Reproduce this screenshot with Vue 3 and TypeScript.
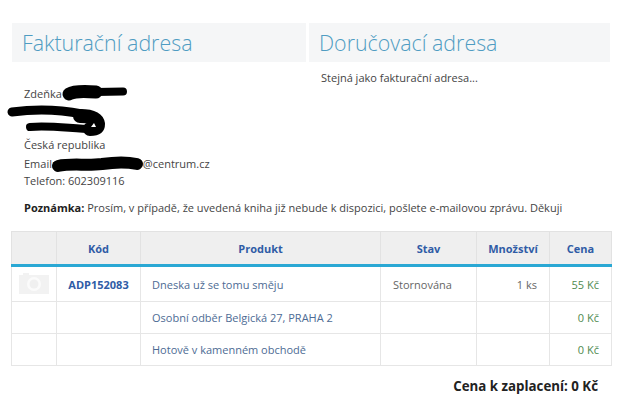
<script setup lang="ts">
interface Row {
  code: string
  product: string
  state: string
  qty: string
  price: string
  photo: boolean
}

const rows: Row[] = [
  { code: 'ADP152083', product: 'Dneska už se tomu směju', state: 'Stornována', qty: '1 ks', price: '55 Kč', photo: true },
  { code: '', product: 'Osobní odběr Belgická 27, PRAHA 2', state: '', qty: '', price: '0 Kč', photo: false },
  { code: '', product: 'Hotově v kamenném obchodě', state: '', qty: '', price: '0 Kč', photo: false }
]
</script>

<template>
  <div class="page">
    <div class="heads">
      <h2>Fakturační adresa</h2>
      <h2>Doručovací adresa</h2>
    </div>

    <div class="addresses">
      <div class="billing">
        <p>Zdeňka</p>
        <p>&nbsp;</p>
        <p>&nbsp;</p>
        <p>Česká republika</p>
        <p class="email">Email:<span class="hidden-mail"></span>@centrum.cz</p>
        <p>Telefon: 602309116</p>
      </div>
      <div class="delivery">Stejná jako fakturační adresa...</div>
    </div>

    <p class="note"><b>Poznámka:</b> Prosím, v případě, že uvedená kniha již nebude k dispozici, pošlete e-mailovou zprávu. Děkuji</p>

    <table>
      <colgroup>
        <col style="width: 45px" />
        <col style="width: 84px" />
        <col style="width: 240px" />
        <col style="width: 96px" />
        <col style="width: 73px" />
        <col style="width: 62px" />
      </colgroup>
      <thead>
        <tr>
          <th></th>
          <th>Kód</th>
          <th>Produkt</th>
          <th>Stav</th>
          <th>Množství</th>
          <th>Cena</th>
        </tr>
      </thead>
      <tbody>
        <tr v-for="(row, i) in rows" :key="i">
          <td class="photo">
            <svg v-if="row.photo" width="31" height="21" viewBox="0 0 31 21">
              <path d="M1 2h4V0h6v2h20v19H1z" fill="#f2f2f2" />
              <circle cx="16" cy="11" r="7" fill="#fbfbfb" />
              <circle cx="16" cy="11" r="4.5" fill="#f0f0f0" />
            </svg>
          </td>
          <td class="code">{{ row.code }}</td>
          <td class="product">{{ row.product }}</td>
          <td class="state">{{ row.state }}</td>
          <td class="qty">{{ row.qty }}</td>
          <td class="price">{{ row.price }}</td>
        </tr>
      </tbody>
    </table>

    <div class="total">Cena k zaplacení: 0 Kč</div>

    <!-- zacerneni osobnich udaju -->
    <svg class="scribble" width="623" height="410" viewBox="0 0 623 410">
      <g fill="none" stroke="#000" stroke-linecap="round" stroke-linejoin="round">
        <path d="M69 94C74 91 84 91 96 92" stroke-width="13" />
        <path d="M96 92L123 91.5" stroke-width="8" />
        <path d="M12 112C35 109 62 110 82 114" stroke-width="9" />
        <path d="M80 116C90 116 97 118 98 124C98 128 96 129 90 129" stroke-width="14" />
        <path d="M92 129C74 129 50 125 30 127" stroke-width="8" />
        <path d="M58 166C72 163 86 166 102 164C115 162 128 162 137 164" stroke-width="12" />
      </g>
      <path d="M91 127l3-4 2 4z" fill="#fff" />
    </svg>
  </div>
</template>

<style scoped>
.page {
  position: relative;
  width: 623px;
  height: 410px;
  overflow: hidden;
  background: #fff;
  font-family: "Open Sans", "Liberation Sans", sans-serif;
  font-size: 11px;
  color: #444;
}

.heads {
  display: grid;
  grid-template-columns: 294px 301px;
  column-gap: 3px;
  padding: 23px 0 0 12px;
}

h2 {
  margin: 0;
  height: 39px;
  padding-left: 10px;
  background: #f5f6f7;
  font-size: 21.4px;
  font-weight: 300;
  line-height: 39px;
  color: #4f9cc2;
}

.addresses {
  display: flex;
}

.billing {
  width: 297px;
  padding: 23px 0 0 24px;
  box-sizing: border-box;
}

.billing p {
  margin: 0;
  height: 17px;
  line-height: 17px;
}

.billing .email {
  margin-top: 2px;
}

.hidden-mail {
  display: inline-block;
  width: 88px;
}

.delivery {
  padding: 7px 0 0 24px;
  line-height: 17px;
}

.note {
  margin: 10px 0 0 24px;
  line-height: 17px;
  color: #444;
}

.note b {
  color: #222;
}

table {
  width: 600px;
  margin: 15px 0 0 11px;
  border-collapse: collapse;
  table-layout: fixed;
}

th {
  height: 32px;
  padding: 0;
  background: #efefef;
  border: 1px solid #e2e2e2;
  border-bottom: 3px solid #2aa8d4;
  font-size: 11px;
  font-weight: 700;
  color: #2f5ca6;
  text-align: center;
}

td {
  height: 31px;
  padding: 0;
  border: 1px solid #e6e6e6;
  color: #666;
}

tbody tr:first-child td {
  height: 34px;
}

.photo {
  text-align: center;
}

.photo svg {
  display: block;
  margin: -2px auto 0 6px;
}

.code {
  font-weight: 700;
  color: #2f5ca6;
  text-align: center;
}

.product {
  padding-left: 11px;
  color: #4d6b94;
}

.state {
  padding-left: 12px;
}

.qty {
  padding-right: 12px;
  text-align: right;
}

.price {
  padding-right: 12px;
  text-align: right;
  color: #4f8a4f;
}

.total {
  padding: 11px 25px 0 0;
  font-size: 13.3px;
  font-weight: 700;
  color: #222;
  text-align: right;
}

.scribble {
  position: absolute;
  top: 0;
  left: 0;
  pointer-events: none;
}
</style>
